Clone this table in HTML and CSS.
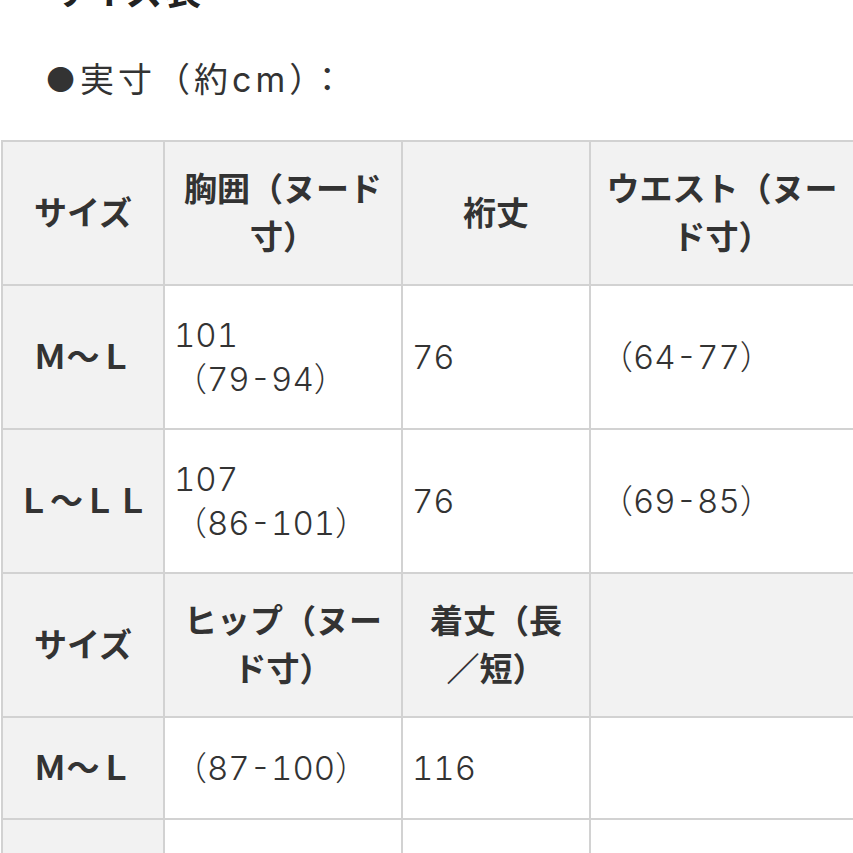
FILE: index.html
```html
<!DOCTYPE html>
<html lang="ja">
<head>
<meta charset="utf-8">
<link rel="stylesheet" href="styles.css">
</head>
<body>
<div class="page">
  <h2 class="title">サイズ表</h2>
  <p class="sub">●実寸（約cm）：</p>
  <table class="size">
    <colgroup>
      <col class="c1"><col class="c2"><col class="c3"><col class="c4">
    </colgroup>
    <tr class="r-head">
      <th>サイズ</th>
      <th>胸囲（ヌード寸）</th>
      <th>裄丈</th>
      <th>ウエスト（ヌード寸）</th>
    </tr>
    <tr class="r-data">
      <th>Ｍ～Ｌ</th>
      <td>101<br>（79-94）</td>
      <td>76</td>
      <td>（64-77）</td>
    </tr>
    <tr class="r-data">
      <th>Ｌ～ＬＬ</th>
      <td>107<br>（86-101）</td>
      <td>76</td>
      <td>（69-85）</td>
    </tr>
    <tr class="r-head">
      <th>サイズ</th>
      <th>ヒップ（ヌード寸）</th>
      <th>着丈（長<br>／短）</th>
      <th></th>
    </tr>
    <tr class="r-short">
      <th>Ｍ～Ｌ</th>
      <td>（87-100）</td>
      <td>116</td>
      <td></td>
    </tr>
    <tr class="r-short">
      <th>Ｌ～ＬＬ</th>
      <td>（87-100）</td>
      <td>116</td>
      <td></td>
    </tr>
  </table>
</div>
</body>
</html>
```

FILE: styles.css
```css
html, body {
  margin: 0;
  padding: 0;
  background: #ffffff;
  overflow: hidden;
}
body {
  width: 853px;
  height: 853px;
  font-family: Inter, "Noto Sans CJK JP", "Noto Sans", sans-serif;
  color: #333333;
}
.page {
  padding: 0 0 0 1px;
}
.title {
  margin: -32px 0 0 50px;
  font-size: 37px;
  line-height: 48px;
  font-weight: bold;
  color: #222;
  letter-spacing: 1px;
}
.sub {
  margin: 40px 0 0 44px;
  font-size: 34px;
  line-height: 48px;
  font-weight: normal;
  color: #333;
  letter-spacing: 4px;
}
.size {
  margin-top: 36px;
  border-collapse: collapse;
  table-layout: fixed;
  width: 852px;
}
.c1 { width: 162px; }
.c2 { width: 238px; }
.c3 { width: 188px; }
.c4 { width: 264px; }
.size th, .size td {
  border: 2px solid #d2d2d2;
  font-size: 33px;
  vertical-align: middle;
  padding: 0 9px;
}
.size th {
  background: #f2f2f2;
  font-weight: bold;
  text-align: center;
  color: #333;
  line-height: 48px;
}
.size td {
  background: #ffffff;
  font-weight: 300;
  text-align: left;
  color: #333;
  letter-spacing: 0;
  line-height: 44px;
  font-variant-numeric: tabular-nums;
}
.r-head, .r-data { height: 144px; }
.r-short { height: 102px; }
```
